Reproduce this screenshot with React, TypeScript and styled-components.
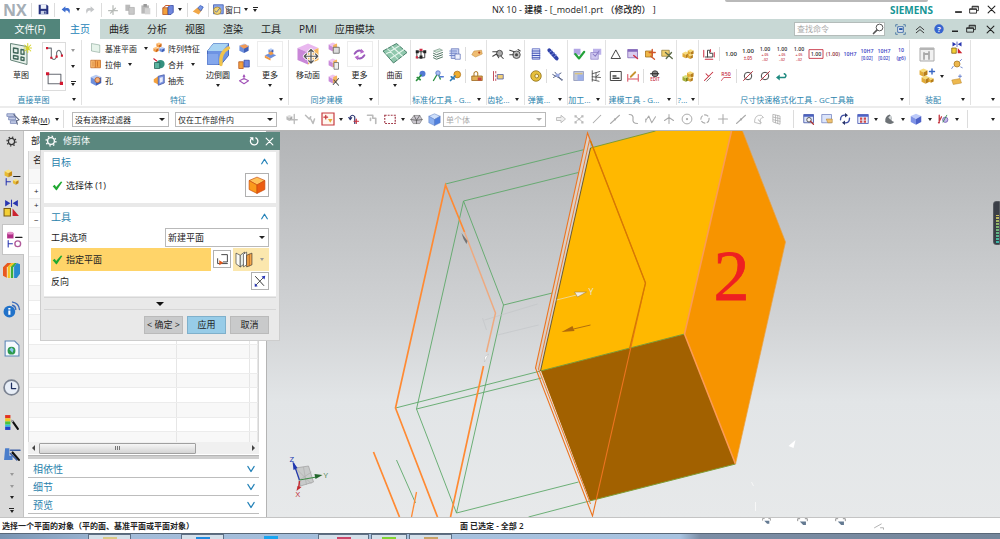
import React from "react";
import styled, { createGlobalStyle } from "styled-components";

const Global = createGlobalStyle`
  * { box-sizing: border-box; }
  html, body { margin: 0; height: 100%; }
  body, button, select, input, table {
    font-family: "Open Sans", "Noto Sans CJK SC", sans-serif;
    font-size: 8px;
    color: #222;
  }
  button { background: none; border: 0; padding: 0; margin: 0; cursor: pointer; }
  svg { display: block; }
`;

/* ---------- icon drawings, all on a 16 x 16 grid ---------- */

const poly = (points: string, fill: string, stroke = "none") => (
  <polygon points={points} fill={fill} stroke={stroke} strokeWidth="0.6" />
);
const cube = (top: string, left: string, right: string, edge = "none") => (
  <>
    {poly("8,1 15,4 8,8 1,4", top, edge)}
    {poly("1,4 8,8 8,15.5 1,12", left, edge)}
    {poly("15,4 8,8 8,15.5 15,12", right, edge)}
  </>
);
const miniCube = (x: number, y: number, s: number, top: string, left: string, right: string) => (
  <g transform={`translate(${x} ${y}) scale(${s / 16})`}>{cube(top, left, right)}</g>
);
const line = (d: string, stroke: string, w = 1.4, fill = "none") => (
  <path d={d} stroke={stroke} strokeWidth={w} fill={fill} strokeLinecap="round" strokeLinejoin="round" />
);
const label = (text: string, fill: string, y = 10, size = 7) => (
  <text x="8" y={y} fontSize={size} fontWeight="600" fill={fill} textAnchor="middle">
    {text}
  </text>
);

const GOLD = ["#f8dc78", "#e2ab35", "#b67d18"] as const;
const BLUE = ["#b7ccf5", "#6d8fdc", "#3f5fb8"] as const;
const ORANGE = ["#ffc37a", "#f19a44", "#d06a18"] as const;

const modelSmall = (mark: React.ReactNode) => (
  <>
    {miniCube(0, 0, 13, "#f0c4f0", "#c98ada", "#f0a860")}
    {poly("7,4 12,2 12,8 7,10", "#f5b55c")}
    {mark}
  </>
);

const icons: Record<string, React.ReactNode> = {
  save: <><path d="M1 1h12l2 2v12H1z" fill="#26327f" /><path d="M4 1h8v6H4z" fill="#eef2fb" /><path d="M4 10h8v5H4z" fill="#c8d0e6" /><path d="M9 11h2v3H9z" fill="#26327f" /></>,
  undo: <path d="M1 7l6-5v3c6-1 9 2 6 9-1-5-3-6-6-5v3z" fill="#3f6fd0" />,
  redo: <path d="M15 7L9 2v3C3 4 0 7 3 14c1-5 3-6 6-5v3z" fill="#c4c6c8" />,
  cut: line("M8 1v14M1 9h14M4 13l8-8", "#b7bbb8", 2),
  copy: <><path d="M2 1h7v9H2z" fill="#bbb" /><path d="M7 5h8v10H7z" fill="#c9c9c9" stroke="#aaa" /></>,
  paste: <><path d="M2 2h11v12H2z" fill="#b9b9b9" /><path d="M5 0h5v4H5z" fill="#999" /><path d="M7 6h8v9H7z" fill="#d4d4d4" /></>,
  block: <><path d="M1 5h7v9H1z" fill="#f4a13c" stroke="#b2521e" /><path d="M8 4l3-2h4v9l-3 3H8z" fill="#6f86dd" stroke="#32469f" />{line("M2 5l3-3h5", "#c85c2a")}</>,
  touch: <><path d="M1 10l6-5 7 2-5 7z" fill="#f0a748" />{line("M8 5l3-3 4 2-3 5z", "#3156b5", 1, "#7898e6")}</>,
  win: <><path d="M2 1h13v12H2z" fill="#8aa6ea" stroke="#3a56ab" /><circle cx="7" cy="9" r="5" fill="#f3d573" stroke="#a5822c" />{line("M4 9l2 2 4-5", "#3156b5", 1)}</>,
  sketch: <>{poly("1,1 12,3 12,15 1,12", "#e7f0ea", "#55776a")}{line("M3 4l3 .5v3L3 7zM8 5l2 .3v3L8 8zM3 9l3 .5v2L3 11zM8 10l2 .4v2L8 12z", "#40675a", 0.9)}{line("M12.500 1v6M10 4h5M10.500 2l4 4M14.500 2l-4 4", "#d5d42b", 0.7)}</>,
  curve: <>{line("M1 2h4v9q3 4 5-1V6q3-5 5 3", "#6a6f76", 1)}<path d="M4 10h2v2H4zM9 9h2v2H9zM0 1h2v2H0zM14 8h2v2h-2z" fill="#d31930" /></>,
  rect: <>{line("M2 4h12v9H2z", "#676b73", 1)}<path d="M0 2h3v3H0zM13 11h3v3h-3z" fill="#d31930" /></>,
  plane: poly("2,2 13,4 13,14 2,12", "#e6f3ea", "#618674"),
  extrude: <><path d="M1 3h6v10H1z" fill="#ffc57c" stroke="#c26821" /><path d="M7 3h7v10H7z" fill="#f5a34a" stroke="#c26821" />{line("M4 5v6M10 5v6", "#c26821", 1)}</>,
  hole: <>{miniCube(0, 0, 16, ...BLUE)}<circle cx="10" cy="8" r="3.500" fill="#f4b17a" stroke="#b2521e" /></>,
  pattern: <>{miniCube(4, 0, 8, ...ORANGE)}{miniCube(0, 6, 8, ...ORANGE)}{miniCube(8, 6, 8, ...BLUE)}</>,
  unite: <><circle cx="10" cy="8" r="5.500" fill="#34907f" /><path d="M2 6h7v8H2z" fill="#5bb39f" stroke="#1f5f55" />{line("M1 1l4 3", "#d31930")}</>,
  shell: <><path d="M1 7l6-4v11l-6-3z" fill="#f4a13c" /><path d="M7 3l8-2v11l-8 3z" fill="#7e96e2" stroke="#3d52a3" /><path d="M9 5l4-1v6l-4 2z" fill="#e8ecfb" /></>,
  blend: <>{poly("1,6 5,1 15,1 15,9 10,15 1,15", "#6d93e3", "#3a5eb5")}{poly("1,6 5,1 15,1 11,6", "#a9d4f2")}{line("M10 15q-1-8 5-11", "#f0c34c", 2.200)}{poly("1,8 8,8 8,15 1,15", "#84a7ec")}</>,
  face1: <>{miniCube(1, 1, 14, ...BLUE)}{poly("2,5 10,3 14,6 8,9", "#f29a56")}</>,
  face2: <><path d="M1 5h6v9H1z" fill="#f4a13c" stroke="#b2521e" /><path d="M8 3h7v9H8z" fill="#6f86dd" stroke="#32469f" /></>,
  face3: <>{line("M2 9l6-3 6 3-6 4zM8 2v5", "#a253b8")}<path d="M6 4l2-4 2 4z" fill="#a253b8" /></>,
  more: <>{miniCube(5, 0, 7, ...BLUE)}{poly("1,9 8,6 15,9 8,13", "#6d8fdc")}{poly("1,9 8,13 8,15.500 1,12", "#f19a44")}{poly("5,6 9,4 12,7 8,9", "#f19a44")}</>,
  more2: <>{line("M2 7q4-6 9-3M14 9q-4 6-9 3", "#9a5abb", 2.400)}<path d="M10 1l4 4-5 2zM6 15l-4-4 5-2z" fill="#b568c9" /></>,
  move: <>{poly("1,4 8,1 15,4 8,7", "#e9b8ef")}{poly("1,4 8,7 8,15 1,12", "#c987d8")}{poly("15,4 8,7 8,15 15,12", "#f6b85e")}{line("M10 5v9M5.500 9.500h9M8.500 6.500L10 5l1.500 1.500M8.500 12.500L10 14l1.500-1.500M7 8L5.500 9.500 7 11M13 8l1.500 1.500L13 11", "#fff", 2)}{line("M10 5v9M5.500 9.500h9M8.500 6.500L10 5l1.500 1.500M8.500 12.500L10 14l1.500-1.500M7 8L5.500 9.500 7 11M13 8l1.500 1.500L13 11", "#555", 0.8)}</>,
  m1: modelSmall(<path d="M7 7h8v8H7z" fill="#ddd" stroke="#555" />),
  m2: modelSmall(<path d="M8 6h6v9H8z" fill="#eee" stroke="#666" />),
  m3: modelSmall(line("M7 14l7-8M8 8l6 7", "#555")),
  surface: <>{poly("0,6 9,1 16,7 7,14", "#8fc7ac", "#3d7761")}{line("M3 4.500l7 7M6 3l7 6.500M2 8l9-5.500M5 11l9-6", "#e4f5ec", 0.7)}</>,
  std1: <>{line("M3 5h10v8H3zM8 2v12", "#333", 1.200)}<path d="M1 3h4v4H1zM11 3h4v4h-4zM6 10h4v4H6z" fill="#222" /><path d="M6 1h4v3H6zM1 11h3v3H1z" fill="#d02e45" /></>,
  std2: <>{poly("2,4 10,1 14,3 6,6", "#cfe5d6", "#3e6552")}{line("M2 7l4 2 8-3M2 10l4 2 8-3M2 13l4 2 8-3", "#3e6552", 1.200)}</>,
  std3: <><path d="M3 1h10v13H3z" fill="#c8d2f3" stroke="#6576b8" />{line("M1 4h9M1 7h9M1 10h9", "#7487c9")}<path d="M8 8h7v7H8z" fill="#eef1fc" stroke="#6576b8" /></>,
  tag: <>{poly("1,9 4,4 14,3 15,8 6,12", "#f0bd72", "#b07a2b")}<circle cx="11" cy="6" r="1.500" fill="#b4471f" /></>,
  key1: <><circle cx="10" cy="5" r="4" fill="#5279d4" />{line("M8 7l-6 7M3 10l4 3", "#2c9140", 2.200)}</>,
  key2: <>{line("M2 14L8 4l3 8", "#2c9140", 1.800)}<circle cx="8" cy="4" r="3" fill="#aabdf0" stroke="#5071c5" />{line("M10 9h5", "#5279d4", 2)}</>,
  key3: <><circle cx="11" cy="6" r="4.500" fill="#efae2e" stroke="#ac6d12" />{line("M8 8l-6 6M3 9l4 3", "#2f7bb5", 2.200)}</>,
  lock: <><path d="M1 8h14v6H1z" fill="#e2b055" stroke="#996317" />{line("M4 8V4q3-4 5 0v4", "#ac7b27")}<path d="M9 10h5v4H9z" fill="#c64343" /></>,
  gear1: <><circle cx="10" cy="7" r="4" fill="#aaa" stroke="#333" />{line("M1 11l5-3 3 5M1 5h6M12 11l3 3", "#444")}</>,
  gear2: <><circle cx="10" cy="9" r="5" fill="#bbb" stroke="#333" /><circle cx="10" cy="9" r="2" fill="#444" />{line("M1 3l6 2M1 9h5M12 2l3 2", "#444")}</>,
  gear3: <>{line("M2 2v12M5 2v2M5 7v2M5 12v2", "#bb3d4c", 1.200)}<path d="M7 6h8v6H7z" fill="#f1cf7a" stroke="#4a59a0" /></>,
  spring: <><path d="M3 1h10v14H3z" fill="#dfe4fb" stroke="#4d5cb9" />{line("M3 4h10M3 7h10M3 10h10M3 13h10", "#4052b5")}</>,
  spring2: <>{line("M3 3l10 11", "#3042a8", 5)}{line("M3 6l4-3M6 9l4-3M9 12l4-3", "#8fa0ea", 1)}</>,
  washer: <><circle cx="8" cy="8" r="7" fill="#e6bf3b" stroke="#8a6a12" /><circle cx="9" cy="8" r="2.500" fill="#fbf4d4" stroke="#8a6a12" /></>,
  springx: <>{line("M1 6l13 7M4 3l9 11M2 10L12 4", "#4c587f", 1.200)}<path d="M5 5h5v4H5z" fill="#9aa9e2" /></>,
  proc1: <><path d="M1 1h9v8H1z" fill="#b1a5e4" />{line("M3 8l5 6 7-9", "#24a23a", 2.800)}</>,
  proc2: <><path d="M4 1h11v8H4z" fill="#bcb2ea" /><path d="M1 6h10v9H1z" fill="#cfc8ef" stroke="#9185c9" />{line("M4 8l3 3 5-7", "#8a7cc6")}</>,
  proc3: <><path d="M1 2h13v12H1z" fill="#c2c7d8" stroke="#8892b5" /><path d="M6 6h8v8H6z" fill="#9db0ea" />{line("M3 5h9", "#e1c160")}</>,
  proc4: line("M3 1v14M3 5l10-3M3 9l11 1M3 13l9 2M8 4v9M12 6l-4 3", "#444", 1.100),
  tri: line("M8 3l6 11H2z", "#333", 1.200),
  build1: <><path d="M1 2h13v11H1z" fill="#d9ccef" stroke="#7b5fb0" /><path d="M1 2h13v3H1z" fill="#8468bd" />{line("M9 10l5 4", "#cf3348", 2)}</>,
  build2: <><path d="M2 4h9v8H2z" fill="#f0b746" stroke="#9d6b15" />{line("M11 2v8M7 6h8M9 11l5 4", "#d0562b", 1.800)}</>,
  build3: <><path d="M1 3h10v8H1z" fill="#f0cf6d" stroke="#8f7a35" />{line("M6 6l9 8M14 6l-7 8", "#5d6b4a", 1.800)}</>,
  frame: <>{line("M1 2h14v12H1z", "#333", 1.200)}{line("M4 11h8M4 8h4", "#444", 1.800)}</>,
  dim: <>{line("M1 6v9M15 6v9M2 12h12", "#d2364a", 1.200)}{line("M5 9l6-6", "#c7932f", 2.400)}</>,
  edit: <><circle cx="8" cy="5" r="4" fill="#888" stroke="#222" />{line("M2 5h11", "#222")}{label("EDIT", "#c62f3f", 15, 6)}</>,
  boxes: <>{miniCube(0, 4, 10, ...GOLD)}{miniCube(7, 1, 9, ...GOLD)}{miniCube(7, 7, 8, ...GOLD)}</>,
  boxes2: <>{miniCube(0, 6, 10, "#d8e07a", "#a4b035", "#728018")}{miniCube(6, 1, 10, ...GOLD)}{miniCube(7, 8, 8, ...GOLD)}</>,
  gd: <>{line("M3 12h10V7H9V3H6v9", "#333", 1.200)}{line("M1 3v9M10 2v3M15 6v6M3 15h10", "#cf3348")}</>,
  t100: label("1.00", "#333"),
  tol1: <>{label("1.00", "#333", 7)}{label("±.05", "#c62f3f", 15, 5)}</>,
  tol2: <>{label("1.00", "#333", 4, 6)}{label("+.05", "#c62f3f", 10, 4)}{label("-.02", "#c62f3f", 16, 4)}</>,
  boxed: <><path d="M0 3h16v10H0z" fill="none" stroke="#c62f3f" />{label("1.00", "#333", 10, 6)}</>,
  paren: label("(1.00)", "#8c3038", 10, 6),
  fit: label("10H7", "#3a3fc4", 10, 6),
  fit2: <>{label("10H7", "#3a3fc4", 7, 6)}{label("[0.02]", "#3a3fc4", 15, 5)}</>,
  fit3: <>{label("10", "#3a3fc4", 6, 6)}{label("(g6)", "#3a3fc4", 15, 6)}</>,
  ang: <>{line("M2 14L13 3M4 5l3 3", "#c62f3f")}{line("M5 15l5-5", "#555", 1)}</>,
  rad: <>{label("R50", "#c62f3f", 8, 7)}{line("M2 14l3-4h9", "#c62f3f", 1)}</>,
  dia: <><circle cx="8" cy="8" r="5" fill="none" stroke="#444" strokeWidth="1.300" />{line("M2 14L14 2", "#b5333f", 1.300)}</>,
  ret: <>{line("M3 10h9q3-3-1-5", "#1f8a80", 2)}<path d="M5 6v8L0 10z" fill="#1f8a80" /></>,
  asm1: <><path d="M1 2h14v13H1z" fill="#f1f1f1" stroke="#aaa" /><path d="M1 2h14v2H1z" fill="#b5b5b5" />{line("M5 7v6M5 8h5v5M10 6v3", "#aaa", 1.800)}</>,
  asm2: <>{miniCube(0, 0, 9, ...GOLD)}{miniCube(2, 7, 9, ...GOLD)}{miniCube(9, 9, 6, ...GOLD)}{line("M13 1v5M10.500 3.500h5", "#3665c3")}</>,
  mate: <><path d="M2 0l5 3-5 3zM14 0L9 3l5 3z" fill="#2936b0" />{line("M8 0v6", "#2936b0", 1)}<path d="M1 8h6v7H1z" fill="#f3cf35" stroke="#7c5c10" /><path d="M9 8l6 7H9z" fill="#cc2430" /></>,
  asm4: <><circle cx="8" cy="8" r="4" fill="#edb84e" stroke="#a67620" />{line("M1 14l2-3M14 2l-2 2M13 12l2 1", "#4967c1", 1)}</>,
  asm5: <>{poly("1,8 12,6 14,12 3,14", "#edb84e", "#b07c1f")}{line("M12 1v4M10 3h4", "#4967c1", 1)}</>,
  menu: <><path d="M1 2h9v3H1zM3 6h8v3H3zM5 10h7v3H5z" fill="#c3cce6" stroke="#6979ad" strokeWidth="0.800" />{line("M9 3l6 6-3 1 1 4", "#5b647f", 1.200)}</>,
  g1: <>{miniCube(0, 2, 9, "#ddd", "#bbb", "#aaa")}{line("M11 2v12M7 9h8", "#bbb", 1.800)}</>,
  g2: line("M2 3l5 5 2-3M9 8l3 6 2-6", "#bbb", 2),
  filt: <><path d="M0 0h16v16H0z" fill="#fff6ee" stroke="#c73a3f" strokeWidth="1.600" />{line("M5 3v5M2.500 5.500h5", "#c73a3f", 1.600)}<path d="M8 8h6l-3 5z" fill="#e5aa3a" /></>,
  snap: <>{line("M3 8V5q3-4 6 0v9M1 6l2 3 2-3", "#27316f", 1.500)}{line("M11 8v6M8 11h6", "#c7303d", 1.600)}</>,
  g3: line("M2 3h7v4h4v7M6 7v3", "#bbb", 2.200),
  marquee: <path d="M1 3h14v11H1z" fill="none" stroke="#a23a48" strokeDasharray="2.500 1.500" strokeWidth="1.600" />,
  wire: <>{poly("1,8 5,3 12,3 15,8 12,13 4,13", "#c9c5cc", "#555")}{line("M1 8l7 1 7-1M8 9v4M5 3l3 6 4-6", "#555", 0.9)}</>,
  bcube: cube("#cfe0fb", "#8db1f0", "#4f7fdc", "#5a7ac0"),
  arrow: <path d="M2 6h6V3l6 5-6 5v-3H2z" fill="#eee" stroke="#bbb" strokeWidth="1.200" />,
  atoms: <>{line("M3 4l5 4 5-4M3 12l5-4 5 4", "#aaa", 1)}<path d="M2 3h3v3H2zM11 3h3v3h-3zM2 11h3v3H2zM11 11h3v3h-3zM6.500 6.500h3v3h-3z" fill="#bbb" /></>,
  diag: line("M3 13L13 3", "#aaa", 1.400),
  diag2: <>{line("M2 14L14 3", "#aaa", 1.400)}<circle cx="8" cy="8.500" r="1.500" fill="#aaa" /></>,
  bend: line("M3 2q6 0 5 6t6 6", "#aaa", 1.600),
  zig: line("M1 10l4-6 4 9 5-8M1 8v4", "#aaa", 1.400),
  plusup: line("M8 2v12M2 10l6-4 6 4", "#aaa", 1.400),
  target: <><circle cx="8" cy="8" r="6.500" fill="none" stroke="#aaa" strokeWidth="1.300" /><circle cx="8" cy="8" r="1.500" fill="#aaa" /></>,
  circ: <circle cx="8" cy="8" r="5.500" fill="none" stroke="#aaa" strokeWidth="1.500" strokeDasharray="6 2" />,
  plus: line("M8 2v12M2 8h12", "#aaa", 1.400),
  sheet: <>{line("M2 12q0-10 9-9l3 3q-6 0-4 8z", "#bbb", 1.200)}{line("M7 9l4 4", "#bbb")}</>,
  mesh: <>{line("M3 2l9 2v11l-9-3zM6 3v10M9 3.500V14M3 5.500l9 2M3 9l9 2", "#aaa", 1)}</>,
  zoomw: <><path d="M1 2h13v11H1z" fill="#dce5fb" stroke="#33459b" /><path d="M1 2h13v3H1z" fill="#4c62bf" /><circle cx="8" cy="9" r="3" fill="#f4f4f4" stroke="#333" />{line("M10 11l4 4", "#a33", 1.600)}</>,
  pan: <><path d="M1 2h13v11H1z" fill="#dce5fb" stroke="#7182bf" /><path d="M7 8h8v5H9z" fill="#efc272" stroke="#a87a30" strokeWidth="0.700" /></>,
  rot: <>{line("M2 9q0-7 7-6M14 7q0 7-7 6", "#3f50a5", 1.800)}<path d="M8 0l4 3-4 3zM8 10l-4 3 4 3z" fill="#2a3568" /></>,
  layout: <><path d="M1 2h14v12H1z" fill="#eaeefb" stroke="#3d4fae" /><path d="M1 2h14v3H1z" fill="#4d63c7" /><path d="M4 6h3v3H4zM9 6h3v3H9zM4 10h3v3H4zM9 10h3v3H9z" fill="#d04a4a" /></>,
  shade: <><path d="M3 12q-1-8 6-10l3 4q-3 4 3 6-5 5-12 0z" fill="#6d7276" /><path d="M7 6l3-3 2 3-2 3z" fill="#d1d6d8" /></>,
  vcube: cube("#bccafa", "#7f93e6", "#4d62c8"),
  hide: <>{line("M3 3v10M2 13l4-8", "#c53b45", 1.800)}<circle cx="11" cy="9" r="3.500" fill="#c5b5ea" stroke="#6a54ac" />{line("M8 12l5-9", "#3a9450", 1.200)}</>,
  gear: <><circle cx="8" cy="8" r="4.500" fill="none" stroke="currentColor" strokeWidth="1.800" /><circle cx="8" cy="8" r="6.500" fill="none" stroke="currentColor" strokeWidth="1.800" strokeDasharray="2 3.100" /></>,
  nav1: <>{miniCube(1, 0, 8, "#fbe27a", "#e8bb2f", "#c68a13")}{miniCube(9, 9, 6, "#fbe27a", "#e8bb2f", "#c68a13")}{line("M3 9v6M3 12h4", "#2936b0", 1)}{line("M10 7h6", "#222", 1)}</>,
  nav3: <><path d="M2 2h6v5H2z" fill="#b12e87" /><ellipse cx="5" cy="2" rx="3" ry="1.300" fill="#e290c8" />{line("M3 9v6M3 12h4", "#2936b0", 1)}{line("M10 6h6", "#222", 1)}<circle cx="12" cy="12" r="2.700" fill="none" stroke="#b05a9a" strokeWidth="1.300" /></>,
  books: <>{poly("0,5 4,1 8,1 4,5 4,15 0,13", "#e8591f")}{poly("4,5 8,1 11,1 7,5 7,15 4,15", "#f5c421")}{poly("7,5 11,1 13,1 10,5 10,15 7,15", "#3cad3a")}{poly("10,5 13,1 16,2 16,11 13,15 10,15", "#2789cf")}{line("M4 5v10M7 5v10M10 5v10", "#fff", 0.6)}</>,
  info: <><circle cx="6" cy="10" r="5.500" fill="#2272c9" /><path d="M5 9h2v4H5zM5 6.500h2v1.500H5z" fill="#fff" />{line("M9 4q3 1 3 4M9 1q6 1 6.500 7", "#3a6bbb", 1.300)}</>,
  html: <><path d="M2 1h9l4 4v10H2z" fill="#f4f8fd" stroke="#5b86b5" /><circle cx="8" cy="10" r="3.700" fill="#2d9a4d" /><path d="M6 9l2-2 2 2-1 3z" fill="#8ac6ef" /></>,
  clock: <><circle cx="8" cy="8" r="7" fill="#e8eef7" stroke="#7a8291" strokeWidth="1.600" />{line("M8 4v5h4", "#1d2e60", 1.200)}</>,
  spectrum: <><path d="M2 1h5v3H2z" fill="#e23322" /><path d="M2 4h5v3H2z" fill="#f2c924" /><path d="M2 7h5v3H2z" fill="#4cc43c" /><path d="M2 10h5v2H2z" fill="#2cc2dd" /><path d="M2 12h5v3H2z" fill="#2540c8" />{line("M9 7l5 7", "#111", 2)}{line("M8 6l1 1", "#aaa", 1.500)}</>,
  role: <><path d="M2 3h4v7h3v4H1z" fill="#4b7ecb" />{line("M7 5h9M7 8l6 6", "#3c5fa5", 1.400)}{line("M9 7l6 7", "#111", 2)}</>,
  body: <>{poly("8,1 15,4 8,8 1,4", "#ffc25a", "#c84a0c")}{poly("1,4 8,8 8,15.500 1,12", "#fb9a1c", "#c84a0c")}{poly("15,4 8,8 8,15.500 15,12", "#ec5c10", "#c84a0c")}</>,
  planeDlg: <>{line("M7 2h7v9H9M6 13h8M2 7v6h3", "#444", 1.200)}<path d="M4 9l5 3-5 3z" fill="#e2581c" /></>,
  planes: <>{poly("0,2 4,4 4,15 0,12", "#fbfbf5", "#333")}{poly("4,4 8,1 8,12 4,15", "#e9efe9", "#333")}{poly("7,3 10,1 10,13 7,15", "#fff", "#333")}{poly("10,4 15,2 15,13 10,15", "#f5a64a", "#333")}{line("M12.500 3v11", "#a85a10", 0.7)}</>,
  flip: <>{line("M2 2l11 12", "#333", 1.300)}{line("M3 13L13 3", "#333", 1.100)}<path d="M10 2l5-1-1 5zM1 11l4 4-4 .500z" fill="#2633b5" /></>,
  check: <path d="M1 9l3-2 2 3 7-8 2 1-8 12H6z" fill="#1fa831" />,
  restore: <path d="M5 2h10v7h-3M1 6h11v7H1zM5 2v4M5 3h10M1 7h11" fill="none" stroke="currentColor" strokeWidth="1.400" />,
  close: line("M2 2l12 12M14 2L2 14", "currentColor", 2),
  min: <path d="M2 11h12v3H2z" fill="currentColor" />,
  reset: <>{line("M11 3a6 6 0 1 1-7 1", "currentColor", 2)}<path d="M1 2h6v6z" fill="currentColor" /></>,
  search: <><circle cx="10" cy="6" r="4.500" fill="none" stroke="#555" strokeWidth="1.300" />{line("M6.500 9.500L2 14", "#555", 2.200)}</>,
  full: <><path d="M1 4V1h3M12 1h3v3M15 12v3h-3M4 15H1v-3" fill="none" stroke="#3d6f9e" strokeWidth="1.200" /><path d="M4 4h8v8H4z" fill="#fff" stroke="#2759a5" strokeWidth="1.300" /><path d="M6 6h5v3H6z" fill="#2759a5" /></>,
  chevs: line("M2 9l6-5 6 5M2 14l6-5 6 5", "#333", 1.500),
  help: <><circle cx="8" cy="8" r="7.500" fill="#3765cf" /><text x="8" y="12" fontSize="12" fontWeight="700" fill="#fff" textAnchor="middle">?</text></>,
  up: line("M3 12l5-8 5 8", "#2482b8", 2.200),
  down: line("M3 4l5 8 5-8", "#2482b8", 2.200),
  stat: <>{line("M1 4V1h3M12 1h3v3", "#666", 1)}<path d="M4 5h9v5H9z" fill="#647a92" /></>,
  stat2: <>{line("M2 13l9-5M10 13h4v2", "#999", 1)}</>,
};

const Svg = styled.svg`
  flex: none;
  overflow: visible;
`;
const Icon = ({ name, size = 12 }: { name: string; size?: number }) => (
  <Svg width={size} height={size} viewBox="0 0 16 16" aria-hidden="true">{icons[name]}</Svg>
);

/* ---------- shared parts ---------- */

const Tool = styled.button<{ $w?: number }>`
  display: flex;
  align-items: center;
  justify-content: center;
  flex: none;
  width: ${(p) => p.$w ?? 18}px;
  height: 18px;
`;
const Caret = styled.span<{ $w?: number; $soft?: boolean }>`
  display: flex;
  align-items: center;
  justify-content: center;
  flex: none;
  width: ${(p) => p.$w ?? 8}px;
  &::after {
    content: "";
    border: 2px solid transparent;
    border-top: 3px solid ${(p) => (p.$soft ? "#999" : "#222")};
    border-bottom: 0;
  }
`;
const BarCaret = styled(Caret)`
  flex-direction: column;
  gap: 1px;
  &::before { content: ""; width: 5px; height: 1px; background: #222; }
`;
const Sep = styled.span<{ $w?: number; $h?: number }>`
  flex: none;
  width: ${(p) => p.$w ?? 7}px;
  height: ${(p) => p.$h ?? 14}px;
  background: linear-gradient(#dcdcdc, #dcdcdc) center / 1px 100% no-repeat;
`;
const Spacer = styled.span`flex: 1;`;

const Page = styled.div`
  display: flex;
  flex-direction: column;
  min-height: 100vh;
  background: #fff;
  overflow: hidden;
`;

/* ---------- title bar ---------- */

const TitleBar = styled.header`
  position: relative;
  display: flex;
  align-items: center;
  height: 19px;
`;
const TopNotch = styled.div`
  position: absolute;
  top: 0;
  right: 72px;
  width: 203px;
  height: 2px;
  background: #b9b9b9;
  border-radius: 0 0 3px 3px;
`;
const Quick = styled.div`
  display: flex;
  align-items: center;
  flex: 0 0 492px;
`;
const Logo = styled.span`
  flex: none;
  width: 28px;
  padding-left: 3px;
  font: 700 16px/18px "Open Sans", sans-serif;
  color: #a5aeb6;
`;
const WindowMenu = styled.button`
  display: flex;
  align-items: center;
  gap: 1px;
`;
const Title = styled.h1`
  flex: 1;
  margin: 0;
  font-size: 9px;
  font-weight: 500;
  line-height: 18px;
  white-space: nowrap;
`;
const Brand = styled.span`
  margin-right: 17px;
  font: 700 10px/18px "Open Sans", sans-serif;
  color: #159595;
`;
const WinButtons = styled.div`
  display: flex;
  align-items: center;
  color: #222;
`;

/* ---------- tabs ---------- */

const TabBar = styled.nav`
  display: flex;
  align-items: center;
  height: 20px;
  background: #c8d8d5;
`;
const Tab = styled.button<{ $kind?: "file" | "active" }>`
  flex: none;
  height: 20px;
  padding: 0 9px;
  font-size: 10px;
  line-height: 18px;
  ${(p) => p.$kind === "file" && "width: 60px; background: #52857b; color: #fff;"}
  ${(p) => p.$kind === "active" && "padding: 0 10px; background: #fff; color: #1d7fb8;"}
`;
const Search = styled.label`
  display: flex;
  align-items: center;
  width: 91px;
  height: 14px;
  margin-right: 5px;
  background: #fff;
  border: 1px solid #b4bcba;
  input {
    flex: 1;
    min-width: 0;
    padding: 0 2px;
    border: 0;
    outline: 0;
    background: none;
    font-size: 8px;
    line-height: 12px;
  }
  input::placeholder { color: #aaa; }
`;

/* ---------- ribbon ---------- */

const Ribbon = styled.section`
  display: flex;
  height: 69px;
  padding-top: 1px;
  border-bottom: 2px solid #ececec;
`;
const GroupBox = styled.div<{ $w?: number }>`
  display: flex;
  flex-direction: column;
  flex: ${(p) => (p.$w ? `0 0 ${p.$w}px` : "1 0 0")};
  min-width: 0;
  height: 65px;
  border-right: 1px solid #e2e2e2;
  &:last-child { border-right: 0; }
`;
const GroupBody = styled.div`
  display: flex;
  height: 54px;
`;
const GroupFoot = styled.div`
  display: flex;
  align-items: center;
  height: 11px;
  line-height: 11px;
  color: #2b83ad;
  white-space: nowrap;
  span:first-child { flex: 1; text-align: center; }
`;
const Rows = styled.div<{ $pad?: number }>`
  display: flex;
  flex-direction: column;
  gap: 4px;
  padding: 5px 0 0 ${(p) => p.$pad ?? 2}px;
`;
const Row = styled.div`
  display: flex;
  align-items: center;
`;
const Column = styled.div<{ $w: number }>`
  display: flex;
  flex-direction: column;
  flex: none;
  width: ${(p) => p.$w}px;
  ${Tool} { width: 100%; height: 16px; }
`;
const Feature = styled.button`
  display: flex;
  align-items: center;
  gap: 3px;
  height: 16px;
  white-space: nowrap;
`;
const Big = styled.button<{ $w: number; $framed?: boolean }>`
  display: flex;
  flex-direction: column;
  align-items: center;
  flex: none;
  width: ${(p) => p.$w}px;
  height: 54px;
  line-height: 10px;
  > span:first-child {
    display: flex;
    align-items: center;
    justify-content: center;
    width: 26px;
    height: 26px;
    margin: 1px 0 3px;
    border: 1px solid ${(p) => (p.$framed ? "#ededed" : "transparent")};
  }
  ${Caret} { height: 11px; }
`;
const Gallery = styled.div`
  display: flex;
  flex-direction: column;
  justify-content: space-around;
  align-items: center;
  width: 24px;
  height: 49px;
  margin-top: 2px;
  border: 1px solid #dcdcdc;
`;
const GalleryNav = styled.div`
  display: flex;
  flex-direction: column;
  justify-content: space-around;
  width: 14px;
  height: 50px;
  margin-top: 2px;
  align-items: center;
`;

const Group = ({ w, title, children }: { w: number; title: string; children: React.ReactNode }) => (
  <GroupBox $w={w}>
    <GroupBody>{children}</GroupBody>
    <GroupFoot><span>{title}</span><Caret $w={w < 30 ? 10 : 14} /></GroupFoot>
  </GroupBox>
);
const IconRows = ({ rows, pad }: { rows: string[][]; pad?: number }) => (
  <Rows $pad={pad}>
    {rows.map((r, i) => (
      <Row key={i}>
        {r.map((n, j) => n === "|" ? <Sep key={j} $w={5} /> : <Tool key={j} $w={17} aria-label={n}><Icon name={n} size={n.match(/^(t100|tol|boxed|paren|fit)/) ? 14 : 12} /></Tool>)}
      </Row>
    ))}
  </Rows>
);
const BigTool = ({ icon, text, w, size = 24, caret, framed }: { icon: string; text: string; w: number; size?: number; caret?: boolean; framed?: boolean }) => (
  <Big $w={w} $framed={framed}>
    <span><Icon name={icon} size={size} /></span>
    {text}
    {caret && <Caret />}
  </Big>
);
const FeatureTool = ({ icon, text, caret }: { icon: string; text: string; caret?: boolean }) => (
  <Feature><Icon name={icon} />{text}{caret && <Caret $w={12} />}</Feature>
);

/* ---------- selection bar ---------- */

const SelectionBar = styled.div`
  display: flex;
  align-items: center;
  height: 23px;
  padding-left: 6px;
  border-bottom: 1px solid #b5b5b5;
`;
const SelectWrap = styled.span<{ $w: number; $h?: number; $off?: boolean }>`
  position: relative;
  flex: none;
  width: ${(p) => p.$w}px;
  height: ${(p) => p.$h ?? 15}px;
  select {
    appearance: none;
    width: 100%;
    height: 100%;
    padding: 0 12px 0 2px;
    border: 1px solid #b9b9b9;
    border-radius: 0;
    background: #fff;
    color: ${(p) => (p.$off ? "#aaa" : "#222")};
    opacity: 1;
  }
  &::after {
    content: "";
    position: absolute;
    top: calc(50% - 1px);
    right: 4px;
    border: 3px solid transparent;
    border-top-color: ${(p) => (p.$off ? "#aaa" : "#222")};
    border-bottom: 0;
    pointer-events: none;
  }
`;
const Choice = ({ w, value, name, off }: { w: number; value: string; name: string; off?: boolean }) => (
  <SelectWrap $w={w} $off={off}>
    <select aria-label={name} disabled={off}><option>{value}</option></select>
  </SelectWrap>
);
const MenuButton = styled.button`
  display: flex;
  align-items: center;
  gap: 2px;
  width: 58px;
  height: 18px;
  margin-right: 8px;
  border-right: 1px solid #ddd;
  white-space: nowrap;
`;
const Gap = styled.span`flex: 0 0 6px;`;

/* ---------- main area ---------- */

const Main = styled.main`
  position: relative;
  display: flex;
  flex: 1 0 380px;
  min-height: 0;
`;
const Rail = styled.nav`
  display: flex;
  flex-direction: column;
  flex: none;
  width: 24px;
  background: #dadada;
  border-right: 1px solid #c2c2c2;
`;
const RailItem = styled.button<{ $h?: number; $active?: boolean; $gap?: number }>`
  display: flex;
  align-items: center;
  justify-content: center;
  flex: none;
  height: ${(p) => p.$h ?? 31}px;
  margin-bottom: ${(p) => p.$gap ?? 0}px;
  color: #333;
  ${(p) => p.$active && "background: #fff; border: 1px solid #c4c4c4; border-right: 0; margin-left: 2px; margin-right: -1px;"}
`;
const RailNav = styled.div`
  display: flex;
  flex-direction: column;
  align-items: center;
  justify-content: space-around;
  flex: 0 0 48px;
`;
const Navigator = styled.aside`
  display: flex;
  flex-direction: column;
  flex: none;
  width: 243px;
  padding: 0 7px 3px 4px;
  background: #fff;
  border-right: 1px solid #b4b4b4;
`;
const NavTitle = styled.h2`
  margin: 0;
  padding-left: 3px;
  font-size: 9px;
  font-weight: 400;
  line-height: 20px;
`;
const TreeScroll = styled.div`
  flex: 1 1 0;
  min-height: 0;
  overflow: hidden;
  border-right: 1px solid #d5d5d5;
  border-left: 1px solid #d5d5d5;
`;
const Tree = styled.table`
  width: 100%;
  height: 296px;
  border-collapse: collapse;
  table-layout: fixed;
  th { height: 18px; padding: 0 4px; background: #ededed; font-size: 9px; font-weight: 400; line-height: 14px; text-align: left; }
  td { height: 14px; padding: 0 5px; border-right: 1px solid #e6e6e6; border-bottom: 1px solid #ececec; line-height: 10px; }
  tr:nth-child(odd) td { background: #f8f8f8; }
`;
const ScrollBar = styled.div`
  display: flex;
  align-items: center;
  height: 12px;
  padding: 0 4px;
  background: #f0f0f0;
  gap: 4px;
`;
const ScrollArrow = styled.button<{ $dir: "left" | "right" }>`
  border: 3px solid transparent;
  border-${(p) => (p.$dir === "left" ? "right" : "left")}-color: #444;
  border-${(p) => p.$dir}-width: 0;
  padding: 0;
`;
const Thumb = styled.div`
  flex: 0 0 157px;
  height: 11px;
  border: 1px solid #a0a0a0;
  border-radius: 1px;
  background:
    repeating-linear-gradient(90deg, #777 0 1px, transparent 1px 2px) center / 5px 4px no-repeat,
    linear-gradient(#f6f6f6, #d4d4d4);
`;
const Splitter = styled.div`
  height: 4px;
  margin: 1px 0 2px;
  background: #cfcfcf;
  border-top: 1px solid #b5b5b5;
`;
const Drawer = styled.button`
  display: flex;
  align-items: center;
  justify-content: space-between;
  height: 17px;
  padding: 0 3px 0 5px;
  border-bottom: 1px solid #bdbdbd;
  font-size: 10px;
  line-height: 14px;
  color: #2b83ad;
  & + & { height: 18px; }
`;

/* ---------- trim dialog ---------- */

const Dialog = styled.form`
  position: absolute;
  top: 1px;
  left: 40px;
  width: 240px;
  padding-bottom: 6px;
  background: #e9e9e9;
  border: 1px solid #cdcdcd;
  border-top: 0;
`;
const DialogTitle = styled.header`
  display: flex;
  align-items: center;
  gap: 6px;
  height: 18px;
  margin: 0 -1px 2px;
  padding: 0 6px 0 5px;
  background: #5a877e;
  color: #fff;
  font-size: 9px;
  line-height: 16px;
  button { color: #fff; }
`;
const Card = styled.fieldset`
  display: flex;
  flex-direction: column;
  min-width: 0;
  margin: 0 3px 4px;
  padding: 0 7px 4px;
  border: 0;
  background: #fff;
  & + & { margin-bottom: 1px; }
`;
const CardHead = styled.div`
  display: flex;
  align-items: center;
  justify-content: space-between;
  height: 19px;
  font-size: 10px;
  line-height: 18px;
  color: #2b83ad;
`;
const Field = styled.div<{ $h?: number }>`
  display: flex;
  align-items: center;
  height: ${(p) => p.$h ?? 22}px;
  font-size: 9px;
  > label, > span:first-child { flex: 1; }
  select { font-size: 9px; }
`;
const Checked = styled.span<{ $hot?: boolean }>`
  display: flex;
  align-items: center;
  gap: 3px;
  height: 23px;
  padding-left: 1px;
  background: ${(p) => (p.$hot ? "#ffd469" : "transparent")};
`;
const FrameButton = styled.button<{ $s: number }>`
  display: flex;
  align-items: center;
  justify-content: center;
  flex: none;
  width: ${(p) => p.$s}px;
  height: ${(p) => p.$s}px;
  margin-left: 2px;
  border: 1px solid #b0b0b0;
  background: #fff;
`;
const PlaneButton = styled.button`
  display: flex;
  align-items: center;
  justify-content: space-around;
  width: 36px;
  height: 23px;
  margin-left: 2px;
  background: #fbe7ae;
`;
const Fold = styled.button`
  display: flex;
  align-items: center;
  justify-content: center;
  width: 232px;
  height: 13px;
  margin-left: 3px;
  border-top: 1px solid #d6d6d6;
  border-bottom: 1px solid #d6d6d6;
  &::after { content: ""; border: 4px solid transparent; border-top-color: #111; border-bottom: 0; }
`;
const Actions = styled.footer`
  display: flex;
  justify-content: flex-end;
  gap: 4px;
  padding: 6px 10px 0 0;
`;
const Action = styled.button<{ $primary?: boolean }>`
  width: 39px;
  height: 18px;
  border: 1px solid ${(p) => (p.$primary ? "#7fb0cb" : "#bababa")};
  background: ${(p) => (p.$primary ? "#97cce8" : "#c9cacb")};
  font-size: 9px;
  line-height: 14px;
  white-space: nowrap;
`;

/* ---------- graphics view ---------- */

const View = styled.section`
  position: relative;
  flex: 1;
  min-width: 0;
  background: linear-gradient(#b2b4b6 0%, #c2c4c6 25%, #d2d4d6 50%, #e2e5e7 70%, #e7e9ea 100%);
  > svg { position: absolute; inset: 0; width: 100%; height: 100%; }
`;
const SideMeter = styled.div`
  position: absolute;
  top: 70px;
  right: 0;
  width: 7px;
  height: 44px;
  border: 1px solid #55595f;
  border-radius: 3px 0 0 3px;
  background:
    repeating-linear-gradient(transparent 0 2px, #3a3e46 2px 3px),
    linear-gradient(90deg, #3a3e46 2px, transparent 2px),
    linear-gradient(#3a3e46 30%, #d3bc58 30%, #7ab36e 60%, #35b7b0);
`;

const GREEN = "#5ea869";
const PLANE = "#ec7420";

const Scene = () => (
  <svg viewBox="266 131 734 386" preserveAspectRatio="xMidYMid slice" role="img" aria-label="模型">
    <g fill="none" stroke={GREEN} strokeWidth="0.900">
      <path d="M445 184L590 148M463 201L588 170M463 201L416 409L456 513L503 305ZM503 305L560 291" />
      <path d="M395 408L540 371M416 409L541 378M456 513L578 482M528 517L589 501M396 460L415 503" />
    </g>
    <path d="M484 320l53-16M497 335l41-10M482 318l4 12" stroke="#c3c6c9" strokeWidth="0.700" fill="none" />
    <g fill="none" stroke="#ff8a33" strokeWidth="1.700">
      <path d="M437 517L395 408L445 185L464 232M483 366L450 517M373 452L399 517" />
      <path d="M416 492L411 517" strokeWidth="1.300" />
      <path d="M464 232L495 313L486 352" stroke="#eeaa80" strokeWidth="1.500" />
    </g>
    <path d="M461 233l6 8-1 3-3-5z" fill="#727476" />
    <path d="M484 357l4-3-4 8z" fill="#fff" stroke="#bbb" strokeWidth="0.500" />
    <polygon points="587,133 535,368 540,371 590,148" fill="#dccfc5" />
    <polygon points="590,148 655,131 731,131 684,334 540,371" fill="#ffb800" />
    <polygon points="731,131 742,131 785,242 735,464 684,334" fill="#f79400" />
    <polygon points="540,371 684,334 735,464 589,501" fill="#a26100" />
    <path d="M590 148L655 131M540 371L684 334M589 501L735 464" stroke="#7f9c31" strokeWidth="1" />
    <path d="M590 148L540 371" stroke="#6c5a33" strokeWidth="1" />
    <path d="M540 371L589 501" stroke="#f5d9c4" strokeWidth="1" />
    <path d="M731 131L684 334L735 464" fill="none" stroke="#fb9b55" strokeWidth="1.600" />
    <path d="M742 131L785 242L735 464" fill="none" stroke="#e8a146" strokeWidth="0.700" />
    <g fill="none" stroke={PLANE} strokeWidth="1.100">
      <path d="M587 133L535 368L592 516L645 283Z" />
      <path d="M589 140L538 369L590 504" strokeWidth="0.900" />
    </g>
    <path d="M590 141L645 283L629 349" fill="none" stroke="#d57b00" strokeWidth="1.300" />
    <path d="M556 300L576 295" stroke="#ead9b0" strokeWidth="0.800" />
    <polygon points="586,292 574,292 577,297" fill="#f3ece0" stroke="#a5833c" strokeWidth="0.600" />
    <text x="588" y="295" fontSize="9" fill="#e9e2cf">Y</text>
    <path d="M573 329L590 325" stroke="#9d5d12" strokeWidth="0.800" />
    <polygon points="561,332 572,326 574,331" fill="#b16a0a" />
    <text x="731" y="300" fontSize="72" textAnchor="middle" fill="#ee2021" stroke="#ee2021" strokeWidth="0.800" fontFamily="Liberation Serif, serif">2</text>
    <path d="M788 446l7-6-2 8z" fill="#fff" />
    <path d="M751 482l2 4M755 502v9" stroke="#f7f7f7" strokeWidth="1" />
    <g>
      <polygon points="295,468 308,466 313,482 300,486" fill="#c8caca" stroke="#9d9d9d" strokeWidth="0.700" />
      <path d="M299 480L311 472M295 468L311 484M303 467L306 485" stroke="#aaa" strokeWidth="0.600" />
      <path d="M299 480L293 463" stroke="#2138b0" strokeWidth="1.200" />
      <polygon points="292,461 297,468 293,470" fill="#2138b0" />
      <path d="M299 480L316 477" stroke="#3b8a44" strokeWidth="1" />
      <polygon points="322,475 314,474 315,479" fill="#23662d" />
      <path d="M299 481L298 489" stroke="#c02a30" strokeWidth="1.500" />
      <polygon points="296,491 297,486 301,487" fill="#c02a30" />
      <text x="289" y="462" fontSize="8" fill="#2138b0">Z</text>
      <text x="323" y="478" fontSize="8" fill="#4a8450">Y</text>
      <text x="295" y="497" fontSize="8" fill="#c02a30">X</text>
    </g>
  </svg>
);

/* ---------- bottom bars ---------- */

const Status = styled.footer`
  display: flex;
  height: 16px;
  padding-left: 2px;
  border-top: 1px solid #c4c4c4;
  font-weight: 600;
  line-height: 15px;
  white-space: nowrap;
  > span:first-child { flex: 0 0 458px; }
  > span:nth-child(2) { flex: 0 0 292px; }
`;
const StatusMark = styled.span<{ $w: number }>`
  display: flex;
  justify-content: center;
  flex: none;
  width: ${(p) => p.$w}px;
`;
const TaskBar = styled.footer`
  display: flex;
  gap: 2px;
  height: 6px;
  padding-left: 88px;
  border-top: 1px solid #596878;
  background: linear-gradient(90deg, #7a95b3 0, #a3bcd9 12%, #a8c3e0 68%, #7b8da5 70%, #74869b 100%);
  overflow: hidden;
`;
const Task = styled.span<{ $w: number; $c: string; $flat?: boolean }>`
  flex: none;
  width: ${(p) => p.$w}px;
  border: ${(p) => (p.$flat ? 0 : "1px solid #5e7086")};
  border-bottom: 0;
  background:
    linear-gradient(${(p) => p.$c}, ${(p) => p.$c}) center 2px / 14px 100% no-repeat,
    ${(p) => (p.$flat ? "transparent" : "#d5e0ea")};
`;

const rail: [string, number, boolean, number][] = [
  ["nav1", 31, false, 0], ["mate", 31, false, 0], ["nav3", 31, true, 0], ["books", 31, false, 4],
  ["info", 39, false, 0], ["html", 39, false, 0], ["clock", 39, false, 0],
  ["spectrum", 31, false, 0], ["role", 31, false, 0],
];

export default function App() {
  return (
    <Page>
      <Global />
      <TitleBar>
        <TopNotch />
        <Quick>
          <Logo>NX</Logo><Sep />
          <Tool $w={16} aria-label="保存"><Icon name="save" size={11} /></Tool><Sep />
          <Tool $w={16} aria-label="撤销"><Icon name="undo" size={10} /></Tool><Caret />
          <Tool $w={16} aria-label="重做"><Icon name="redo" size={10} /></Tool><Sep />
          <Tool $w={16} aria-label="剪切"><Icon name="cut" size={10} /></Tool>
          <Tool $w={16} aria-label="复制"><Icon name="copy" size={11} /></Tool>
          <Tool $w={16} aria-label="粘贴"><Icon name="paste" size={11} /></Tool><Sep />
          <Tool $w={16} aria-label="块"><Icon name="block" /></Tool><Caret /><Sep />
          <Tool $w={14} aria-label="触控"><Icon name="touch" /></Tool><Sep />
          <WindowMenu><Icon name="win" /><span>窗口</span><Caret /><BarCaret /></WindowMenu>
        </Quick>
        <Title>NX 10 - 建模 - [_model1.prt （修改的） ]</Title>
        <Brand>SIEMENS</Brand>
        <WinButtons>
          <Tool $w={16} aria-label="最小化"><Icon name="min" size={9} /></Tool>
          <Tool $w={16} aria-label="还原"><Icon name="restore" size={10} /></Tool>
          <Tool $w={18} aria-label="关闭"><Icon name="close" size={9} /></Tool>
        </WinButtons>
      </TitleBar>

      <TabBar>
        <Tab $kind="file">文件(F)</Tab>
        <Tab $kind="active">主页</Tab>
        {["曲线", "分析", "视图", "渲染", "工具", "PMI", "应用模块"].map((t) => <Tab key={t}>{t}</Tab>)}
        <Spacer />
        <Search>
          <input type="text" placeholder="查找命令" aria-label="查找命令" />
          <Icon name="search" />
        </Search>
        <Tool $w={20} aria-label="全屏"><Icon name="full" size={11} /></Tool>
        <Tool $w={20} aria-label="收起"><Icon name="chevs" size={10} /></Tool>
        <Tool $w={18} aria-label="帮助"><Icon name="help" size={10} /></Tool>
        <WinButtons>
          <Tool $w={14} aria-label="最小化窗口"><Icon name="min" size={8} /></Tool>
          <Tool $w={18} aria-label="还原窗口"><Icon name="restore" size={10} /></Tool>
          <Tool $w={20} aria-label="关闭窗口"><Icon name="close" size={9} /></Tool>
        </WinButtons>
      </TabBar>

      <Ribbon>
        <Group w={82} title="直接草图">
          <BigTool icon="sketch" text="草图" w={42} />
          <Gallery>
            <Tool aria-label="轮廓"><Icon name="curve" size={17} /></Tool>
            <Tool aria-label="矩形"><Icon name="rect" size={17} /></Tool>
          </Gallery>
          <GalleryNav><Caret $soft /><Caret /><BarCaret /></GalleryNav>
        </Group>
        <Group w={207} title="特征">
          <Column $w={8} />
          <Column $w={63}>
            <FeatureTool icon="plane" text="基准平面" caret />
            <FeatureTool icon="extrude" text="拉伸" caret />
            <FeatureTool icon="hole" text="孔" />
          </Column>
          <Column $w={47}>
            <FeatureTool icon="pattern" text="阵列特征" />
            <FeatureTool icon="unite" text="合并" caret />
            <FeatureTool icon="shell" text="抽壳" />
          </Column>
          <BigTool icon="blend" text="边倒圆" w={36} caret />
          <Column $w={16}>
            {["face1", "face2", "face3"].map((n) => <Tool key={n} aria-label={n}><Icon name={n} /></Tool>)}
          </Column>
          <BigTool icon="more" text="更多" w={36} size={13} caret framed />
        </Group>
        <Group w={90} title="同步建模">
          <BigTool icon="move" text="移动面" w={38} caret={false} />
          <Column $w={14}>
            {["m1", "m2", "m3"].map((n) => <Tool key={n} aria-label={n}><Icon name={n} /></Tool>)}
          </Column>
          <BigTool icon="more2" text="更多" w={37} size={13} caret framed />
        </Group>
        <GroupBox $w={32}><BigTool icon="surface" text="曲面" w={31} caret /></GroupBox>
        <Group w={76} title="标准化工具 - G...">
          <IconRows rows={[["std1", "std2", "std3", "|", "tag"], ["key1", "key2", "key3", "|", "lock"]]} pad={1} />
        </Group>
        <Group w={38} title="齿轮...">
          <IconRows rows={[["gear1", "gear2"], ["gear3"]]} />
        </Group>
        <Group w={43} title="弹簧...">
          <IconRows rows={[["spring", "spring2"], ["washer", "|", "springx"]]} />
        </Group>
        <Group w={38} title="加工...">
          <IconRows rows={[["proc1", "proc2"], ["proc3", "proc4"]]} />
        </Group>
        <Group w={71} title="建模工具 - G...">
          <IconRows rows={[["tri", "build1", "build2", "build3"], ["frame", "dim", "|", "edit"]]} pad={1} />
        </Group>
        <Group w={22} title="?...">
          <IconRows rows={[["boxes"], ["boxes2"]]} />
        </Group>
        <Group w={211} title="尺寸快速格式化工具 - GC工具箱">
          <IconRows
            pad={1}
            rows={[
              ["gd", "|", "t100", "tol1", "tol2", "tol2", "tol2", "boxed", "paren", "fit", "fit2", "fit2", "fit3"],
              ["ang", "rad", "|", "dia", "dia", "ret"],
            ]}
          />
        </Group>
        <Group w={61} title="装配">
          <Rows $pad={8}>
            <Row><Tool aria-label="装配"><Icon name="asm1" size={16} /></Tool></Row>
            <Row><Tool aria-label="添加"><Icon name="asm2" size={16} /></Tool><Caret $w={12} /></Row>
          </Rows>
          <Column $w={18}>
            {["mate", "asm4", "asm5"].map((n) => <Tool key={n} aria-label={n}><Icon name={n} /></Tool>)}
          </Column>
        </Group>
        <GroupBox><GroupBody /><GroupFoot><span /><Caret $w={14} /></GroupFoot></GroupBox>
      </Ribbon>

      <SelectionBar>
        <MenuButton><Icon name="menu" size={14} /><span>菜单(<u>M</u>)</span><Caret $w={10} /></MenuButton>
        <Choice w={97} value="没有选择过滤器" name="类型过滤器" /><Gap />
        <Choice w={102} value="仅在工作部件内" name="选择范围" /><Gap />
        {["g1", "g2", "filt"].map((n) => <Tool key={n} aria-label={n}><Icon name={n} /></Tool>)}
        <Caret />
        {["snap", "g3", "marquee"].map((n) => <Tool key={n} aria-label={n}><Icon name={n} /></Tool>)}
        <Caret />
        {["wire", "bcube"].map((n) => <Tool key={n} aria-label={n}><Icon name={n} size={13} /></Tool>)}
        <Choice w={103} value="单个体" name="体规则" off />
        <Gap />
        {["arrow", "atoms", "diag", "diag2", "bend", "zig", "plusup", "target", "circ", "plus", "diag2", "sheet", "mesh"].map((n, i) => (
          <Tool key={i} aria-label={n}><Icon name={n} /></Tool>
        ))}
        <Sep $w={14} $h={18} />
        {["zoomw", "pan", "rot", "layout"].map((n) => <Tool key={n} aria-label={n}><Icon name={n} /></Tool>)}
        <Caret />
        {["shade", "vcube", "hide"].map((n) => (
          <React.Fragment key={n}><Tool aria-label={n}><Icon name={n} /></Tool><Caret $w={9} /></React.Fragment>
        ))}
        <Sep $w={12} $h={18} /><Spacer /><Caret $w={14} />
      </SelectionBar>

      <Main>
        <Rail>
          <RailItem $h={20} $gap={11} aria-label="设置"><Icon name="gear" size={11} /></RailItem>
          {rail.map(([n, h, on, gap]) => (
            <RailItem key={n} $h={h} $active={on} $gap={gap} aria-label={n}><Icon name={n} size={17} /></RailItem>
          ))}
          <RailNav><Caret $soft /><Caret $soft /><Caret /><BarCaret /></RailNav>
        </Rail>

        <Navigator>
          <NavTitle>部件导航器</NavTitle>
          <TreeScroll>
            <Tree>
              <colgroup><col width="147" /><col width="73" /><col /></colgroup>
              <thead><tr><th>名称</th><th /><th /></tr></thead>
              <tbody>
                {["", "+", "+", "−", ...Array(15).fill("")].map((mark, i) => (
                  <tr key={i}><td>{mark}</td><td /><td /></tr>
                ))}
              </tbody>
            </Tree>
          </TreeScroll>
          <ScrollBar>
            <ScrollArrow $dir="left" aria-label="向左" /><Thumb /><Spacer /><ScrollArrow $dir="right" aria-label="向右" />
          </ScrollBar>
          <Splitter />
          {["相依性", "细节", "预览"].map((t) => <Drawer key={t}>{t}<Icon name="down" size={10} /></Drawer>)}
        </Navigator>

        <View>
          <Scene />
          <SideMeter />
        </View>

        <Dialog onSubmit={(e) => e.preventDefault()}>
          <DialogTitle>
            <Icon name="gear" size={12} />修剪体<Spacer />
            <button type="button" aria-label="重置"><Icon name="reset" size={10} /></button>
            <button type="button" aria-label="关闭"><Icon name="close" size={9} /></button>
          </DialogTitle>
          <Card>
            <CardHead>目标<Icon name="up" size={9} /></CardHead>
            <Field $h={28}>
              <Checked><Icon name="check" size={11} />选择体 (1)</Checked>
              <FrameButton $s={24} type="button" aria-label="体"><Icon name="body" size={18} /></FrameButton>
            </Field>
          </Card>
          <Card>
            <CardHead>工具<Icon name="up" size={9} /></CardHead>
            <Field>
              <label htmlFor="tool-option">工具选项</label>
              <SelectWrap $w={104} $h={19}>
                <select id="tool-option"><option>新建平面</option></select>
              </SelectWrap>
            </Field>
            <Field>
              <Checked $hot><Icon name="check" size={11} />指定平面</Checked>
              <FrameButton $s={18} type="button" aria-label="平面对话框"><Icon name="planeDlg" size={13} /></FrameButton>
              <PlaneButton type="button" aria-label="平面类型"><Icon name="planes" size={17} /><Caret $soft /></PlaneButton>
            </Field>
            <Field>
              <span>反向</span>
              <FrameButton $s={18} type="button" aria-label="反向"><Icon name="flip" size={12} /></FrameButton>
            </Field>
          </Card>
          <Fold type="button" aria-label="更多选项" />
          <Actions>
            <Action type="button">&lt; 确定 &gt;</Action>
            <Action $primary>应用</Action>
            <Action type="button">取消</Action>
          </Actions>
        </Dialog>
      </Main>

      <Status>
        <span>选择一个平面的对象（平的面、基准平面或平面对象）</span>
        <span>面 已选定 - 全部 2</span>
        <StatusMark $w={28}><Icon name="stat" size={9} /></StatusMark>
        <StatusMark $w={44}><Icon name="stat" size={11} /></StatusMark>
        <StatusMark $w={32}><Icon name="stat" size={11} /></StatusMark>
        <StatusMark $w={46}><Icon name="stat2" size={12} /></StatusMark>
      </Status>
      <TaskBar>
        <Task $w={43} $c="#d9c987" /><Task $w={46} $c="transparent" $flat />
        <Task $w={43} $c="#1e8ae0" /><Task $w={90} $c="#19a5f0" $flat />
        <Task $w={51} $c="#c9476a" /><Task $w={36} $c="#7fd334" /><Task $w={43} $c="#c8a368" />
      </TaskBar>
    </Page>
  );
}
